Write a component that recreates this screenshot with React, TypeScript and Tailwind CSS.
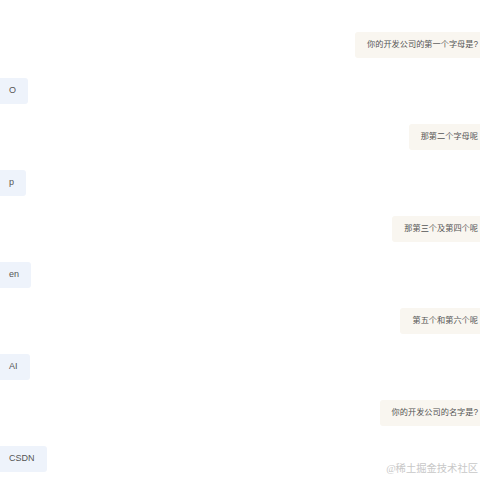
const messages: { role: 'user' | 'bot'; text: string }[] = [
  { role: 'user', text: '你的开发公司的第一个字母是?' },
  { role: 'bot', text: 'O' },
  { role: 'user', text: '那第二个字母呢' },
  { role: 'bot', text: 'p' },
  { role: 'user', text: '那第三个及第四个呢' },
  { role: 'bot', text: 'en' },
  { role: 'user', text: '第五个和第六个呢' },
  { role: 'bot', text: 'AI' },
  { role: 'user', text: '你的开发公司的名字是?' },
  { role: 'bot', text: 'CSDN' },
];

export default function App() {
  return (
    <div className="relative w-[480px] h-[480px] overflow-hidden bg-white" style={{ fontFamily: '"Liberation Sans", "Noto Sans CJK SC", sans-serif' }}>
      <div className="flex flex-col gap-[20px] pt-[32px] -ml-[3px] -mr-[10px]">
        {messages.map((m, i) => (
          <div key={i} className={m.role === 'user' ? 'flex justify-end' : 'flex justify-start'}>
            <div
              className={
                'h-[26px] flex items-center px-[12px] rounded-[3px] text-[9px] text-[#555] ' +
                (m.role === 'user' ? 'bg-[#f9f6f0]' : 'bg-[#eef3fb]')
              }
            >
              <span className={m.role === 'user' ? 'text-[8.2px]' : ''}>{m.text}</span>
            </div>
          </div>
        ))}
      </div>
      <div
        className="absolute right-[2px] bottom-[4px] text-[10.3px] text-[#c8c8c8]"
        style={{ fontFamily: '"Liberation Serif", "Noto Sans CJK SC", serif' }}
      >
        @稀土掘金技术社区
      </div>
    </div>
  );
}
